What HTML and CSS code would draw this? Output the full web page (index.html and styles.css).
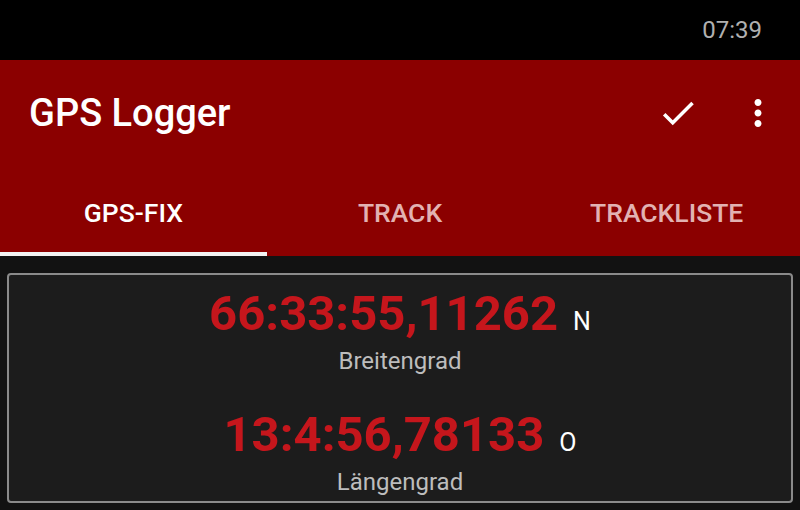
FILE: index.html
```html
<!DOCTYPE html>
<html lang="de">
<head>
    <meta charset="UTF-8">
    <meta name="viewport" content="width=device-width, initial-scale=1.0">
    <title>GPS Logger</title>
    <link rel="stylesheet" href="styles.css">
</head>
<body>
    <div class="status-bar">
        <span class="clock">07:39</span>
    </div>

    <header class="app-bar">
        <div class="toolbar">
            <h1 class="title">GPS Logger</h1>
            <div class="actions">
                <!-- Done -->
                <svg class="icon" viewBox="0 0 24 24"><path d="M9 16.17L4.83 12l-1.42 1.41L9 19 21 7l-1.41-1.41z"/></svg>
                <!-- Overflow menu -->
                <svg class="icon" viewBox="0 0 24 24"><path d="M12 8c1.1 0 2-.9 2-2s-.9-2-2-2-2 .9-2 2 .9 2 2 2zm0 2c-1.1 0-2 .9-2 2s.9 2 2 2 2-.9 2-2-.9-2-2-2zm0 6c-1.1 0-2 .9-2 2s.9 2 2 2 2-.9 2-2-.9-2-2-2z"/></svg>
            </div>
        </div>
        <nav class="tabs">
            <div class="tab active">GPS-FIX</div>
            <div class="tab">TRACK</div>
            <div class="tab">TRACKLISTE</div>
        </nav>
    </header>

    <main class="content">
        <section class="card">
            <div class="coord">
                <div class="value">66:33:55,11262<span class="hemi">N</span></div>
                <div class="label">Breitengrad</div>
            </div>
            <div class="coord">
                <div class="value">13:4:56,78133<span class="hemi">O</span></div>
                <div class="label">Längengrad</div>
            </div>
        </section>
    </main>
</body>
</html>
```

FILE: styles.css
```css
body {
    font-family: Roboto, "Liberation Sans", sans-serif;
    margin: 0;
    padding: 0;
    background-color: #121212;
    width: 800px;
    height: 510px;
    overflow: hidden;
}

.status-bar {
    height: 60px;
    background-color: #000;
    display: flex;
    align-items: center;
    justify-content: flex-end;
    padding-right: 38px;
}

.clock {
    color: #b0b0b0;
    font-size: 24px;
}

.app-bar {
    background-color: #8b0000;
    color: white;
}

.toolbar {
    height: 106px;
    display: flex;
    align-items: center;
    justify-content: space-between;
    padding: 0 21px 0 29px;
}

.title {
    margin: 0;
    font-size: 38px;
    font-weight: 500;
}

.actions {
    display: flex;
    gap: 38px;
}

.icon {
    width: 42px;
    height: 42px;
    fill: white;
}

.tabs {
    display: flex;
    height: 90px;
}

.tab {
    flex: 1;
    display: flex;
    align-items: center;
    justify-content: center;
    padding-top: 6px;
    font-size: 26.5px;
    font-weight: 500;
    color: #e2b2b2;
    border-bottom: 4px solid transparent;
}

.tab.active {
    color: white;
    border-bottom-color: #f2f2f2;
}

.content {
    padding: 17px 7px 0;
}

.card {
    background-color: #1c1c1c;
    border: 2px solid #8a8a8a;
    border-radius: 4px;
    padding: 10px 0 5px;
    display: flex;
    flex-direction: column;
    gap: 31px;
}

.coord {
    display: flex;
    flex-direction: column;
    align-items: center;
}

.value {
    color: #c5161c;
    font-size: 49px;
    font-weight: 700;
    line-height: 58px;
}

.hemi {
    color: white;
    font-size: 25px;
    font-weight: 400;
    line-height: 1;
    margin-left: 15px;
}

.label {
    color: #bdbdbd;
    font-size: 24px;
    line-height: 28px;
    margin-top: 4px;
}
```
